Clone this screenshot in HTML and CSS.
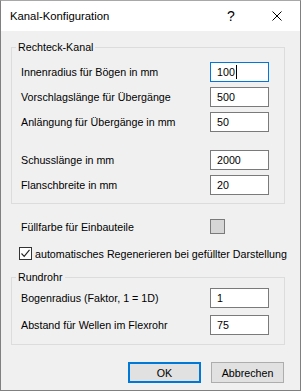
FILE: index.html
```html
<!DOCTYPE html>
<html lang="de">
<head>
    <meta charset="UTF-8">
    <title>Kanal-Konfiguration</title>
    <link rel="stylesheet" href="styles.css">
</head>
<body>
    <div class="window">
        <div class="titlebar">
            <span class="title">Kanal-Konfiguration</span>
            <span class="caption-btn help">?</span>
            <span class="caption-btn close">
                <svg width="10" height="10" viewBox="0 0 10 10">
                    <path d="M0.5 0.5 L9.5 9.5 M9.5 0.5 L0.5 9.5" stroke="#000" stroke-width="1" fill="none"/>
                </svg>
            </span>
        </div>

        <div class="client">
            <fieldset class="group group-rect">
                <legend>Rechteck-Kanal</legend>
                <div class="row">
                    <span class="label">Innenradius für Bögen in mm</span>
                    <div class="field focus">100<span class="caret"></span></div>
                </div>
                <div class="row">
                    <span class="label">Vorschlagslänge für Übergänge</span>
                    <div class="field">500</div>
                </div>
                <div class="row">
                    <span class="label">Anlängung für Übergänge in mm</span>
                    <div class="field">50</div>
                </div>
                <div class="row spaced">
                    <span class="label">Schusslänge in mm</span>
                    <div class="field">2000</div>
                </div>
                <div class="row">
                    <span class="label">Flanschbreite in mm</span>
                    <div class="field">20</div>
                </div>
            </fieldset>

            <div class="color-row">
                <span class="label">Füllfarbe für Einbauteile</span>
                <span class="swatch"></span>
            </div>

            <div class="check-row">
                <span class="checkbox">
                    <svg width="11" height="11" viewBox="0 0 11 11">
                        <path d="M1.5 5.5 L4.2 8.3 L9.5 1.8" stroke="#222" stroke-width="1.1" fill="none"/>
                    </svg>
                </span>
                <span class="label">automatisches Regenerieren bei gefüllter Darstellung</span>
            </div>

            <fieldset class="group group-round">
                <legend>Rundrohr</legend>
                <div class="row">
                    <span class="label">Bogenradius (Faktor, 1 = 1D)</span>
                    <div class="field">1</div>
                </div>
                <div class="row wide">
                    <span class="label">Abstand für Wellen im Flexrohr</span>
                    <div class="field">75</div>
                </div>
            </fieldset>

            <div class="buttons">
                <button class="btn default">OK</button>
                <button class="btn">Abbrechen</button>
            </div>
        </div>
    </div>
</body>
</html>
```

FILE: styles.css
```css
body{
    margin:0;
    padding:0;
    background-color: #f0f0f0;
    font-family: "Liberation Sans", Arial, sans-serif;
    font-size: 10.7px;
    color: #000;
}

.window{
    width:301px;
    height:391px;
    box-sizing: border-box;
    border: 1px solid #808080;
    border-top-color: #a8a8a8;
    background-color: #f0f0f0;
    display: flex;
    flex-direction: column;
}

.titlebar{
    height:30px;
    background-color: white;
    display: flex;
    align-items: center;
}

.title{
    flex: 1;
    padding-left: 9px;
    font-size: 11.3px;
}

.caption-btn{
    width:46px;
    height:30px;
    display: flex;
    justify-content: center;
    align-items: center;
}

.help{
    font-size: 14px;
    padding-bottom: 1px;
    box-sizing: border-box;
}

.close svg{
    display: block;
    margin-top: -1px;
}

.label{
    white-space: nowrap;
}

.client{
    flex: 1;
    padding: 9px 15px 0 10px;
    display: flex;
    flex-direction: column;
}

.group{
    margin:0;
    border: 1px solid #dcdcdc;
    padding: 8px 15px 8px 9px;
    display: flex;
    flex-direction: column;
    gap: 5px;
}

.group legend{
    line-height: 14px;
    padding: 0 2px;
    margin-left: -5px;
}

.row{
    display: flex;
    justify-content: space-between;
    align-items: center;
    height:20px;
}

.row.spaced{
    margin-top: 13px;
}

.field{
    width:59px;
    height:20px;
    box-sizing: border-box;
    border: 1px solid #7a7a7a;
    background-color: white;
    padding-left: 6px;
    line-height: 18px;
    display: flex;
    align-items: center;
}

.field.focus{
    border-color: #0078d7;
}

.caret{
    width:1px;
    height:14px;
    background-color: #000;
    margin-left: 1px;
}

.color-row{
    margin-top: 15px;
    height:15px;
    display: flex;
    justify-content: space-between;
    align-items: center;
    padding-left: 10px;
    padding-right: 60px;
}

.swatch{
    width:15px;
    height:15px;
    box-sizing: border-box;
    border: 1px solid #7a7a7a;
    background-color: #d6d6d6;
}

.check-row{
    margin-top: 13px;
    height:13px;
    display: flex;
    align-items: center;
    gap: 3px;
    padding-left: 8px;
}

.checkbox{
    width:13px;
    height:13px;
    flex-shrink: 0;
    box-sizing: border-box;
    border: 1px solid #333;
    background-color: white;
    display: flex;
    justify-content: center;
    align-items: center;
}

.checkbox svg{
    display: block;
}

.group-round{
    margin-top: 10px;
    padding-top: 4px;
    padding-bottom: 9px;
}

.group-round .row.wide{
    margin-top: 2px;
}

.buttons{
    margin-top: 17px;
    display: flex;
    justify-content: flex-end;
    gap: 10px;
    padding-right: 1px;
}

.btn{
    width:73px;
    height:21px;
    box-sizing: border-box;
    border: 1px solid #adadad;
    background-color: #e1e1e1;
    font-family: inherit;
    font-size: 10.7px;
    color: #000;
    padding: 0;
    margin: 0;
}

.btn.default{
    border: 2px solid #0078d7;
}
```
